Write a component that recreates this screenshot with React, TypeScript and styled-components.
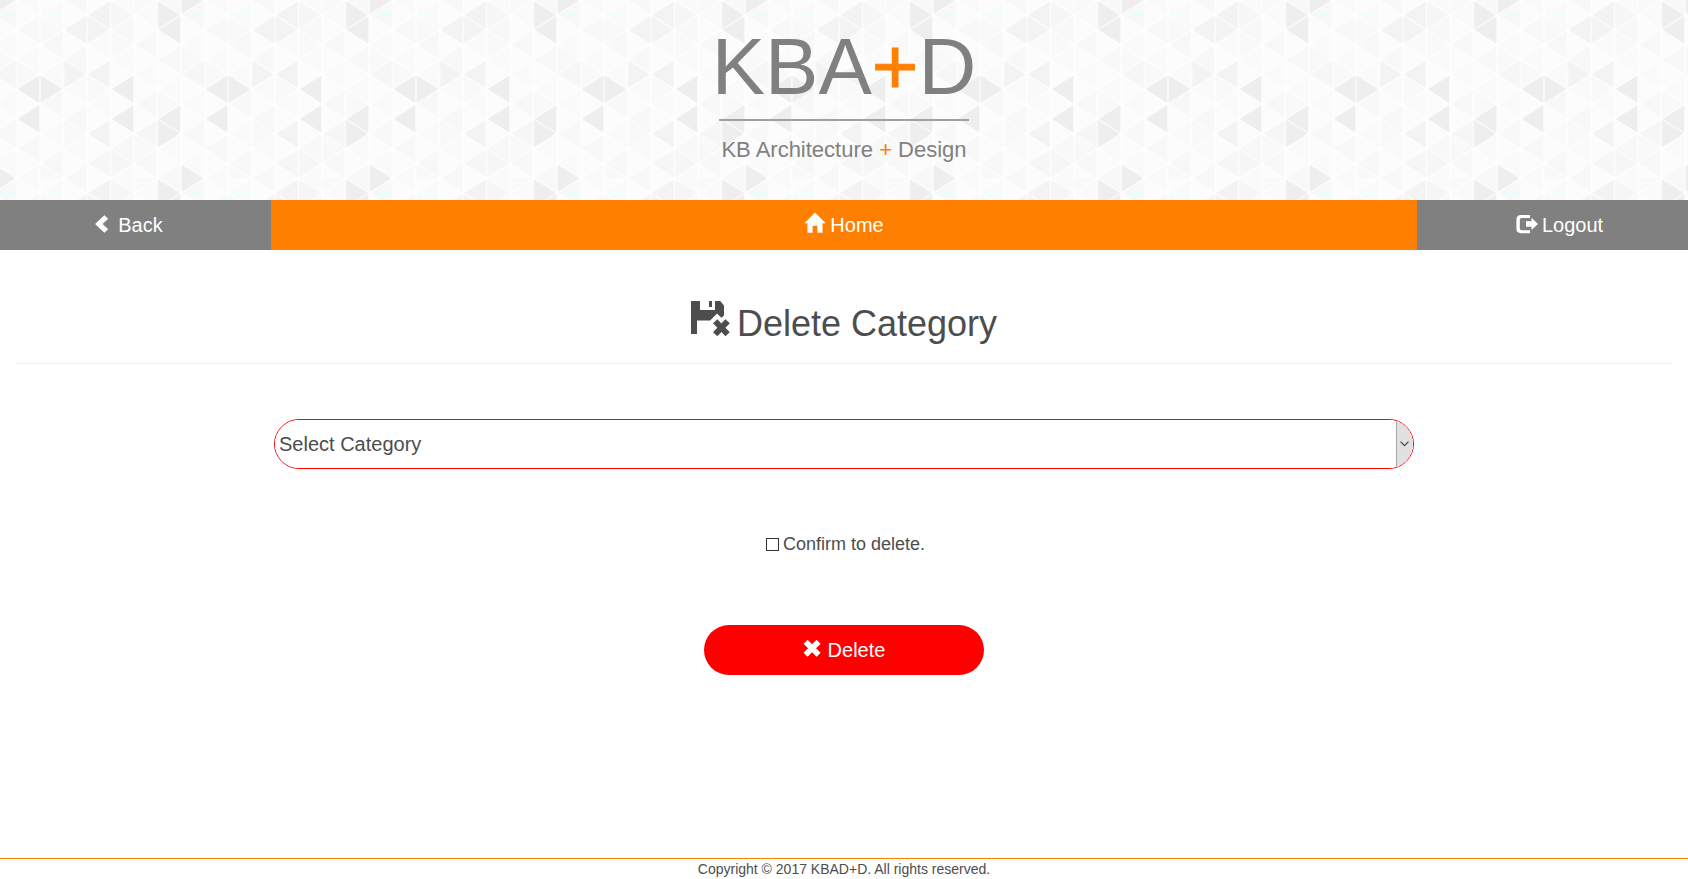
import React from "react";
import styled, { createGlobalStyle } from "styled-components";

const sans = `"Liberation Sans", Arial, Helvetica, sans-serif`;
const ink = "#4d4d4d";
const orange = "#ff8000";
const grey = "#808080";

const GlobalStyle = createGlobalStyle`
  *, *::before, *::after { box-sizing: border-box; }
  body {
    margin: 0;
    background: #fff;
    color: ${ink};
    font-family: ${sans};
    font-size: 14px;
    line-height: 20px;
  }
`;

const Page = styled.div`
  display: flex;
  flex-direction: column;
  min-height: 100vh;
`;

const Banner = styled.header`
  position: relative;
  display: flex;
  flex-direction: column;
  align-items: center;
  height: 200px;
  padding-top: 21px;
  color: ${grey};
`;

const Backdrop = styled.svg`
  position: absolute;
  inset: 0;
  width: 100%;
  height: 100%;
`;

const LogoName = styled.div`
  position: relative;
  font-size: 80px;
  line-height: 92px;
`;

const LogoRule = styled.hr`
  position: relative;
  width: 250px;
  height: 2px;
  margin: 6px 0 0;
  border: 0;
  background: #a0a0a0;
`;

const LogoTagline = styled.div`
  position: relative;
  margin-top: 16px;
  font-size: 22px;
  line-height: 26px;
`;

const Accent = styled.span<{ $heavy?: boolean }>`
  color: ${orange};
  -webkit-text-stroke: ${(p) => (p.$heavy ? `1px ${orange}` : "0")};
`;

const Nav = styled.nav`
  display: grid;
  grid-template-columns: 1fr minmax(auto, 1146px) 1fr;
`;

const NavLink = styled.a<{ $tone: string; $shift?: "left" | "right" }>`
  display: flex;
  align-items: center;
  justify-content: center;
  gap: 4px;
  height: 50px;
  padding-left: ${(p) => (p.$shift === "right" ? "14px" : "0")};
  padding-right: ${(p) => (p.$shift === "left" ? "16px" : "0")};
  background: ${(p) => p.$tone};
  color: #fff;
  font-size: 20px;
  text-decoration: none;
`;

const Main = styled.main`
  flex: 1;
  padding: 51px 15px 0;
`;

const Title = styled.h1`
  display: flex;
  align-items: center;
  justify-content: center;
  gap: 6px;
  margin: 0;
  padding-bottom: 17px;
  border-bottom: 1px solid #eee;
  font-size: 36px;
  font-weight: 400;
  line-height: 40px;
`;

const Form = styled.form`
  display: flex;
  flex-direction: column;
  align-items: center;
  width: 100%;
  max-width: 1140px;
  margin: 55px auto 0;
`;

const SelectFrame = styled.div`
  position: relative;
  width: 100%;
  height: 50px;
  overflow: hidden;
  border: 1px solid #f00;
  border-radius: 25px;
`;

const Select = styled.select`
  width: 100%;
  height: 100%;
  padding: 0 24px 0 4px;
  border: 0;
  outline: 0;
  appearance: none;
  background: #fff;
  color: ${ink};
  font: 20px ${sans};
`;

const SelectArrow = styled.span`
  position: absolute;
  top: 0;
  right: 0;
  bottom: 0;
  display: flex;
  align-items: center;
  justify-content: center;
  width: 17px;
  padding-right: 2px;
  border-left: 1px solid #a8a8a8;
  background: #e1e1e1;
  pointer-events: none;
`;

const Confirm = styled.label`
  display: flex;
  align-items: center;
  gap: 4px;
  margin-top: 63px;
  padding-left: 3px;
  font-size: 18px;
  line-height: 24px;
`;

const Checkbox = styled.input`
  width: 13px;
  height: 13px;
  margin: 0;
  appearance: none;
  border: 1px solid #333;
  background: #fff;
  &:checked { background: #333; }
`;

const DeleteButton = styled.button`
  display: flex;
  align-items: center;
  justify-content: center;
  gap: 5px;
  width: 280px;
  height: 50px;
  margin-top: 69px;
  padding: 0;
  border: 0;
  border-radius: 25px;
  background: #f00;
  color: #fff;
  font: 20px ${sans};
`;

const Footer = styled.footer`
  border-top: 1px solid ${orange};
  text-align: center;
`;

// Triangle mosaic: 8 columns by 12 half rows, repeated every 188 x 178.
const TILE_W = 188;
const TILE_H = 178;
const COL = TILE_W / 8;
const ROW = TILE_H / 12;

const DARK = "#eeeeee";
const MID = "#f3f3f3";
const SOFT = "#f6f6f6";

const shades: Record<string, string> = {
  "0:6": DARK, "0:8": DARK,
  "1:6": DARK,
  "2:2": MID, "2:5": MID,
  "3:1": MID, "3:2": MID, "3:5": MID, "3:9": MID, "3:11": SOFT,
  "4:6": DARK, "4:8": DARK, "4:1": SOFT, "4:11": SOFT,
  "5:9": SOFT,
  "6:1": DARK, "6:2": DARK, "6:8": DARK, "6:9": DARK,
  "7:0": DARK, "7:5": SOFT,
};

function TriangleTile() {
  const cells: React.ReactNode[] = [];
  for (let c = 0; c < 8; c++) {
    for (let n = 0; n <= 12; n++) {
      const left = c * COL;
      const right = left + COL;
      const y = n * ROW;
      const pointsLeft = (c + n) % 2 === 0;
      const fill =
        shades[`${c}:${n % 12}`] ||
        (pointsLeft ? ((c * 5 + n * 3) % 4 === 0 ? "#fafafa" : "#f8f8f8") : (c * 3 + n) % 5 === 0 ? "#f9f9f9" : "#fcfcfc");
      const points = pointsLeft
        ? `${left},${y} ${right},${y - ROW} ${right},${y + ROW}`
        : `${right},${y} ${left},${y - ROW} ${left},${y + ROW}`;
      cells.push(<polygon key={`${c}-${n}`} points={points} fill={fill} stroke="#fff" strokeWidth="1" />);
    }
  }
  const joints: React.ReactNode[] = [];
  for (let c = 0; c <= 8; c++) {
    for (let n = c % 2; n <= 12; n += 2) {
      joints.push(<circle key={`${c}-${n}`} cx={c * COL} cy={n * ROW} r="1.6" fill="#fff" />);
    }
  }
  return (
    <>
      {cells}
      {joints}
      <ellipse cx="180" cy="14.5" rx="8" ry="1.5" fill="#e2ffff" />
      <ellipse cx="36" cy="14.5" rx="10" ry="2" fill="#f0ffff" />
    </>
  );
}

function Pattern() {
  return (
    <Backdrop aria-hidden="true">
      <defs>
        <pattern id="triangles" x="16.5" y="0.3" width={TILE_W} height={TILE_H} patternUnits="userSpaceOnUse">
          <TriangleTile />
        </pattern>
      </defs>
      <rect width="100%" height="100%" fill="url(#triangles)" />
    </Backdrop>
  );
}

const ChevronIcon = () => (
  <svg width="22" height="26" viewBox="0 0 22 26" fill="currentColor" aria-hidden="true">
    <path d="M12.4 3.2 3.6 11.5Q3.2 12 3.6 12.4L12.4 20.7 16.2 17.2 10.6 12 16.2 6.7Z" />
  </svg>
);

const HomeIcon = () => (
  <svg width="22" height="26" viewBox="0 0 22 26" fill="currentColor" aria-hidden="true">
    <path d="M11 .4 21.7 11.3H18.5V20.7H13.4V13.7H8.6V20.7H3.5V11.3H.4Z" />
  </svg>
);

const LogoutIcon = () => (
  <svg width="22" height="26" viewBox="0 0 22 26" fill="currentColor" aria-hidden="true">
    <path d="M14 3H5Q.4 3 .4 7.6V16.6Q.4 21.2 5 21.2H14V18.2H5.8Q3.8 18.2 3.8 16.2V8Q3.8 6 5.8 6H14Z" />
    <path d="M10 9.2H15.5V5.8L22 12 15.5 18V14.8H10Z" />
  </svg>
);

const RemoveIcon = () => (
  <svg width="20" height="26" viewBox="0 0 20 26" aria-hidden="true">
    <path d="M2.6 4.8 15.6 17.8M15.6 4.8 2.6 17.8" fill="none" stroke="currentColor" strokeWidth="5.6" />
  </svg>
);

const FloppyRemoveIcon = () => (
  <svg width="40" height="45" viewBox="0 0 40 45" fill="currentColor" aria-hidden="true">
    <path d="M0 0H9V9H24V0H29.2L33 4.5V14.4L30.4 16.8 26 12.6 19.2 19.4H6V33H0Z" />
    <path d="M18 0H21V6H18Z" />
    <path d="M24.2 20.2 36.6 33.2M36.6 20.2 24.2 33.2" fill="none" stroke="currentColor" strokeWidth="6" />
  </svg>
);

export default function App() {
  return (
    <Page>
      <GlobalStyle />
      <Banner>
        <Pattern />
        <LogoName>
          KBA<Accent $heavy>+</Accent>D
        </LogoName>
        <LogoRule />
        <LogoTagline>
          KB Architecture <Accent>+</Accent> Design
        </LogoTagline>
      </Banner>
      <Nav>
        <NavLink href="#back" $tone={grey} $shift="left">
          <ChevronIcon />
          Back
        </NavLink>
        <NavLink href="#home" $tone={orange}>
          <HomeIcon />
          Home
        </NavLink>
        <NavLink href="#logout" $tone={grey} $shift="right">
          <LogoutIcon />
          Logout
        </NavLink>
      </Nav>
      <Main>
        <Title>
          <FloppyRemoveIcon />
          Delete Category
        </Title>
        <Form onSubmit={(e) => e.preventDefault()}>
          <SelectFrame>
            <Select aria-label="Category" defaultValue="">
              <option value="">Select Category</option>
            </Select>
            <SelectArrow>
              <svg width="9" height="6" viewBox="0 0 9 6" aria-hidden="true">
                <path d="M.5 .7 4.5 4.7 8.5 .7" fill="none" stroke="#444" strokeWidth="1.2" />
              </svg>
            </SelectArrow>
          </SelectFrame>
          <Confirm>
            <Checkbox type="checkbox" />
            Confirm to delete.
          </Confirm>
          <DeleteButton type="submit">
            <RemoveIcon />
            Delete
          </DeleteButton>
        </Form>
      </Main>
      <Footer>Copyright © 2017 KBAD+D. All rights reserved.</Footer>
    </Page>
  );
}
